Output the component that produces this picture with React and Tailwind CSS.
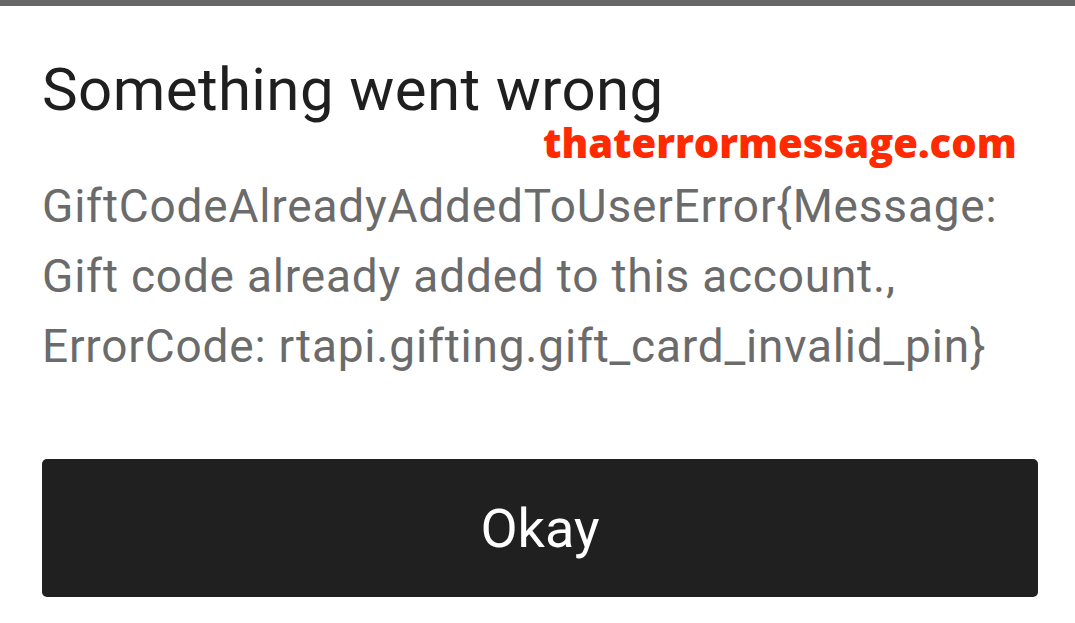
export default function App() {
  return (
    <div className="w-[1075px] h-[623px] bg-white overflow-hidden relative" style={{ fontFamily: 'Roboto, "Liberation Sans", sans-serif' }}>
      <div className="h-[6px] bg-[#666666]" />
      <div className="px-[42px]">
        <h1 className="mt-[50px] text-[60px] leading-[68px] text-[#1f1f1f] font-normal tracking-[0.4px]">Something went wrong</h1>
        <p className="mt-[47px] text-[46px] leading-[70px] text-[#6b6b6b] tracking-[0.8px]">
          GiftCodeAlreadyAddedToUserError{'{'}Message:<br />
          Gift code already added to this account.,<br />
          ErrorCode: rtapi.gifting.gift_card_invalid_pin{'}'}
        </p>
        <button className="mt-[78px] w-[996px] h-[138px] rounded-[5px] bg-[#202020] text-white text-[54px] flex items-center justify-center">
          Okay
        </button>
      </div>
      <div className="absolute left-[543px] top-[123px] text-[#ff2a00] text-[40px] font-extrabold leading-none" style={{ fontFamily: '"Open Sans", sans-serif' }}>
        thaterrormessage.com
      </div>
    </div>
  );
}
